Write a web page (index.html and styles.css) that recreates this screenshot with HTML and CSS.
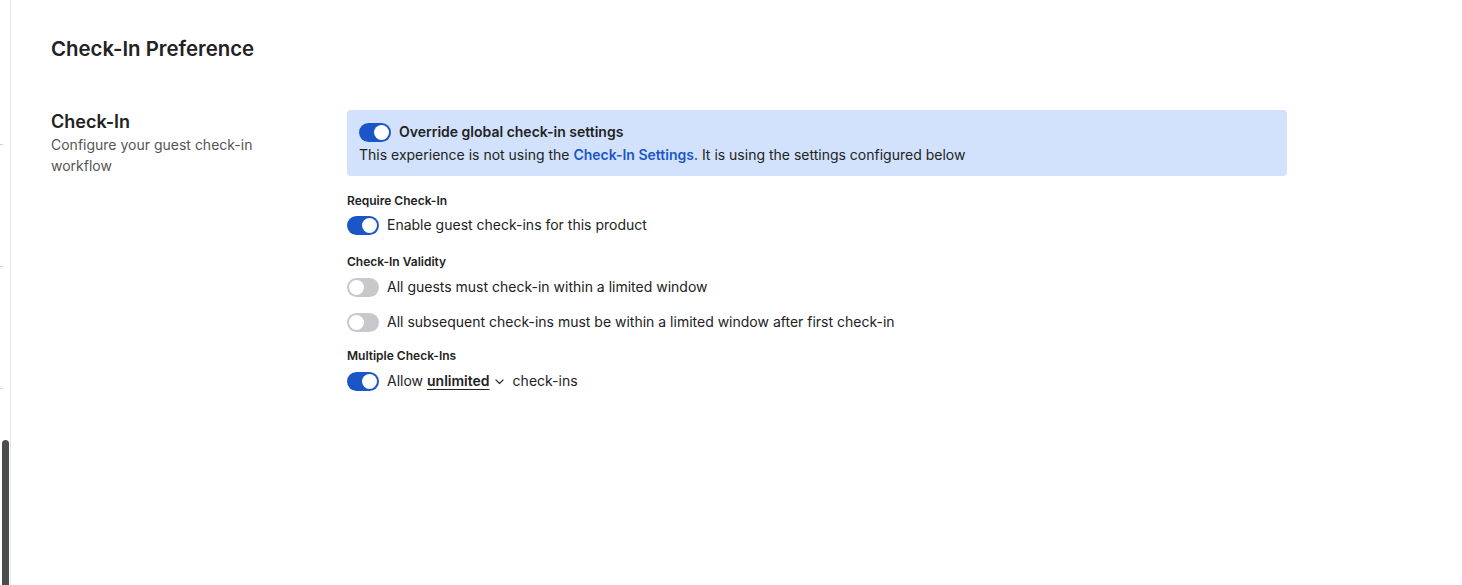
FILE: index.html
```html
<!DOCTYPE html>
<html lang="en">
<head>
<meta charset="utf-8">
<title>Check-In Preference</title>
<link rel="stylesheet" href="styles.css">
</head>
<body>
<div class="page">
  <aside class="rail">
    <span class="tick"></span>
    <span class="tick"></span>
    <span class="tick"></span>
    <span class="thumb"></span>
  </aside>
  <main class="main">
    <h1 class="title">Check-In Preference</h1>
    <section class="section">
      <div class="section-info">
        <h2 class="section-label">Check-In</h2>
        <p class="section-desc">Configure your guest check-in workflow</p>
      </div>
      <div class="section-body">
        <div class="notice">
          <div class="row">
            <span class="toggle on"><span class="knob"></span></span>
            <span class="notice-title">Override global check-in settings</span>
          </div>
          <p class="notice-text">This experience is not using the <a class="link" href="#">Check-In Settings</a>. It is using the settings configured below</p>
        </div>

        <h3 class="field-label first">Require Check-In</h3>
        <div class="row option">
          <span class="toggle on"><span class="knob"></span></span>
          <span>Enable guest check-ins for this product</span>
        </div>

        <h3 class="field-label">Check-In Validity</h3>
        <div class="row option">
          <span class="toggle"><span class="knob"></span></span>
          <span>All guests must check-in within a limited window</span>
        </div>
        <div class="row option second">
          <span class="toggle"><span class="knob"></span></span>
          <span>All subsequent check-ins must be within a limited window after first check-in</span>
        </div>

        <h3 class="field-label mult">Multiple Check-Ins</h3>
        <div class="row option">
          <span class="toggle on"><span class="knob"></span></span>
          <span>Allow</span>
          <span class="select"><span class="select-value">unlimited</span><svg class="chev" width="9" height="6" viewBox="0 0 9 6"><path d="M1 1l3.5 3.5L8 1" fill="none" stroke="#333" stroke-width="1.2" stroke-linecap="round" stroke-linejoin="round"/></svg></span>
          <span>check-ins</span>
        </div>
      </div>
    </section>
  </main>
</div>
</body>
</html>
```

FILE: styles.css
```css
* { box-sizing: border-box; }
html, body { margin: 0; padding: 0; background: #fff; }
body {
  font-family: Inter, "Noto Sans", "Liberation Sans", sans-serif;
  color: #222;
  font-size: 14px;
  line-height: 20px;
}
.page {
  display: flex;
  min-height: 585px;
  height: 585px;
  overflow: hidden;
}
.rail {
  width: 11px;
  flex: 0 0 11px;
  border-right: 1px solid #e4e4e4;
  display: flex;
  flex-direction: column;
  gap: 121px;
  padding-top: 144px;
  position: relative;
}
.tick {
  display: block;
  width: 3px;
  height: 1px;
  background: #d2d2d2;
}
.thumb {
  position: absolute;
  left: 2px;
  top: 440px;
  width: 7px;
  height: 150px;
  background: #4c4d4f;
  border-radius: 4px 4px 0 0;
}
.main {
  flex: 1;
  padding: 37px 0 0 40px;
}
.title {
  margin: 0;
  font-size: 20.4px;
  line-height: 24px;
  font-weight: 600;
  color: #222;
}
.section {
  display: flex;
  margin-top: 49px;
}
.section-info {
  width: 296px;
  flex: 0 0 296px;
  padding-right: 56px;
}
.section-label {
  margin: 0;
  font-size: 18px;
  line-height: 24px;
  font-weight: 600;
  color: #222;
}
.section-desc {
  margin: 0;
  font-size: 14px;
  line-height: 21px;
  color: #555;
}
.section-body {
  width: 940px;
}
.notice {
  background: #d3e2fc;
  border-radius: 4px;
  padding: 12px 12px 11px 12px;
}
.notice-title {
  font-weight: 600;
}
.notice-text {
  margin: 3px 0 0 0;
  line-height: 20px;
}
.link {
  color: #1b56c8;
  font-weight: 600;
  text-decoration: none;
}
.row {
  display: flex;
  align-items: center;
  gap: 8px;
  height: 20px;
}
.option {
  height: 24px;
}
.option.second {
  margin-top: 11px;
}
.toggle {
  position: relative;
  display: inline-block;
  width: 32px;
  height: 19px;
  flex: 0 0 32px;
  border-radius: 10px;
  background: #c7c8cb;
}
.toggle.on {
  background: #1b56c8;
}
.knob {
  position: absolute;
  top: 2px;
  left: 2px;
  width: 15px;
  height: 15px;
  border-radius: 50%;
  background: #fff;
}
.toggle.on .knob {
  left: 15px;
}
.field-label {
  margin: 17px 0 5px 0;
  font-size: 12px;
  line-height: 16px;
  font-weight: 600;
  color: #222;
}
.field-label.first {
  margin-top: 17px;
  margin-bottom: 4px;
}
.field-label.mult {
  margin-top: 14px;
}
.select {
  display: inline-flex;
  align-items: center;
  gap: 5px;
  margin-left: -4px;
  margin-right: 1px;
}
.select-value {
  font-weight: 600;
  text-decoration: underline;
  text-underline-offset: 3px;
  text-decoration-thickness: 1px;
}
.chev {
  display: block;
  margin-top: 2px;
}
```
